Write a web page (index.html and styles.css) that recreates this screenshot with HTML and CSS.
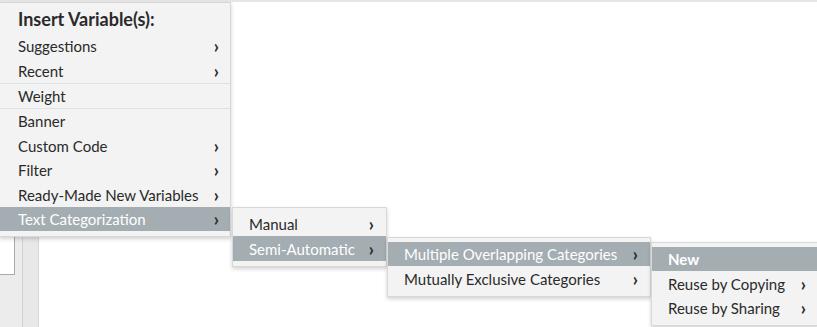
FILE: index.html
```html
<!DOCTYPE html>
<html lang="en">
<head>
    <meta charset="UTF-8">
    <title>Insert Variable(s)</title>
    <link rel="stylesheet" href="styles.css">
</head>
<body>
    <div class="app">
        <div class="rail">
            <div class="rail-outer">
                <div class="input-box"></div>
            </div>
            <div class="rail-inner"></div>
        </div>
        <div class="canvas"></div>
    </div>

    <!-- main menu -->
    <div class="menu menu-main">
        <div class="menu-title">Insert Variable(s):</div>
        <div class="menu-group">
            <div class="item has-sub">Suggestions</div>
            <div class="item has-sub">Recent</div>
        </div>
        <div class="menu-group">
            <div class="item">Weight</div>
        </div>
        <div class="menu-group">
            <div class="item">Banner</div>
            <div class="item has-sub">Custom Code</div>
            <div class="item has-sub">Filter</div>
            <div class="item has-sub">Ready-Made New Variables</div>
            <div class="item has-sub active">Text Categorization</div>
        </div>
    </div>

    <!-- submenus -->
    <div class="menu menu-sub1">
        <div class="item has-sub">Manual</div>
        <div class="item has-sub active">Semi-Automatic</div>
    </div>

    <div class="menu menu-sub2">
        <div class="item has-sub active">Multiple Overlapping Categories</div>
        <div class="item has-sub">Mutually Exclusive Categories</div>
    </div>

    <div class="menu menu-sub3">
        <div class="item active current">New</div>
        <div class="item has-sub">Reuse by Copying</div>
        <div class="item has-sub">Reuse by Sharing</div>
    </div>
</body>
</html>
```

FILE: styles.css
```css
body {
    margin: 0;
    padding: 0;
    background-color: #ffffff;
    font-family: Lato, "Open Sans", "Liberation Sans", sans-serif;
    color: #2a2a2a;
    overflow: hidden;
}

.app {
    display: flex;
    height: 327px;
    border-top: 2px solid #e6e6e6;
    box-sizing: border-box;
}

/* left rail behind the menu */
.rail {
    display: flex;
    height: 100%;
}

.rail-outer {
    width: 22px;
    background-color: #ececec;
    border-right: 1px solid #cdd1d2;
    padding-top: 150px;
}

.input-box {
    width: 14px;
    height: 121px;
    background-color: #ffffff;
    border: 1px solid #a9a9a9;
    border-left: none;
}

.rail-inner {
    width: 15px;
    background-color: #e8e8e8;
    border-right: 1px solid #d6d6d6;
}

.canvas {
    flex-grow: 1;
    background-color: #ffffff;
}

/* menus */
.menu {
    position: absolute;
    background-color: #f3f3f3;
    border: 1px solid #d8d8d8;
    box-shadow: 0 2px 4px rgba(0, 0, 0, 0.18);
    padding: 4px 0 5px 0;
    box-sizing: border-box;
    font-size: 15px;
}

.menu-main {
    top: 2px;
    left: -1px;
    width: 232px;
    padding-top: 0;
}

.menu-title {
    font-weight: 700;
    font-size: 18px;
    padding: 2px 18px 0 18px;
    height: 31px;
    line-height: 28px;
    box-sizing: border-box;
}

.menu-group + .menu-group {
    border-top: 1px solid #dfe2e4;
}

.item {
    display: flex;
    justify-content: space-between;
    align-items: center;
    height: 24.4px;
    padding: 0 11px 0 18px;
    white-space: nowrap;
}

.has-sub::after {
    content: "›";
    font-size: 18px;
    line-height: 1;
    color: #2a2a2a;
    font-weight: 700;
}

.item.active {
    background-color: #a3adb2;
    color: #ffffff;
}

.item.current {
    font-weight: 700;
}

.menu-sub1 {
    top: 207px;
    left: 232px;
    width: 155px;
}

.menu-sub2 {
    top: 237px;
    left: 387px;
    width: 264px;
}

.menu-sub3 {
    top: 242px;
    left: 651px;
    width: 168px;
}

.menu-sub1 .item,
.menu-sub2 .item,
.menu-sub3 .item {
    padding-left: 16px;
    padding-right: 12px;
}
```
